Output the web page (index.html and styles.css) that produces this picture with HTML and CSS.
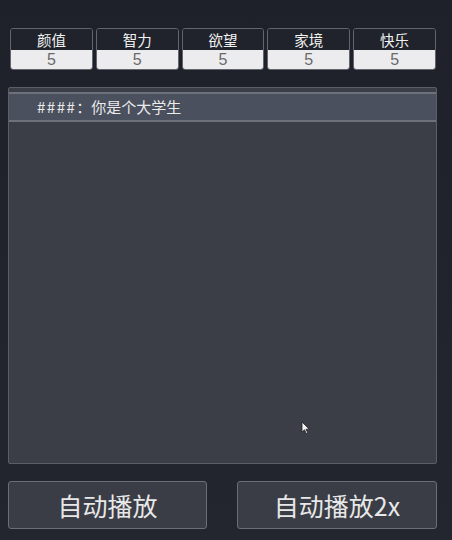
FILE: index.html
```html
<!DOCTYPE html>
<html lang="zh">
<head>
<meta charset="utf-8">
<link rel="stylesheet" href="styles.css">
</head>
<body>
<div class="app">
  <div class="stats">
    <div class="stat"><div class="stat-label">颜值</div><div class="stat-value">5</div></div>
    <div class="stat"><div class="stat-label">智力</div><div class="stat-value">5</div></div>
    <div class="stat"><div class="stat-label">欲望</div><div class="stat-value">5</div></div>
    <div class="stat"><div class="stat-label">家境</div><div class="stat-value">5</div></div>
    <div class="stat"><div class="stat-label">快乐</div><div class="stat-value">5</div></div>
  </div>
  <div class="panel">
    <div class="row"><span class="hash">####</span>：你是个大学生</div>
  </div>
  <div class="buttons">
    <button class="btn btn-left">自动播放</button>
    <button class="btn btn-right">自动播放2x</button>
  </div>
  <svg class="cursor" width="10" height="14" viewBox="0 0 10 14"><path d="M1 1 L1 11 L3.5 8.8 L5.3 12.6 L6.8 11.9 L5 8.2 L8.3 8.2 Z" fill="#f2f2f2" stroke="#222" stroke-width="0.8"/></svg>
</div>
</body>
</html>
```
FILE: styles.css
```css
html, body {
  margin: 0;
  padding: 0;
}
body {
  width: 452px;
  height: 540px;
  background: linear-gradient(#1e2129, #23262e);
  font-family: "Noto Sans CJK SC", "Noto Sans", sans-serif;
  overflow: hidden;
}
.app {
  position: relative;
  padding-top: 28px;
}
.stats {
  display: grid;
  grid-template-columns: repeat(5, 1fr);
  gap: 3px;
  margin: 0 16px 0 10px;
}
.stat {
  border: 1px solid #62656d;
  border-radius: 3px;
  overflow: hidden;
  height: 40px;
  display: flex;
  flex-direction: column;
}
.stat-label {
  height: 21px;
  background: #20232b;
  color: #f2f2f2;
  font-size: 14.5px;
  line-height: 21px;
  text-align: center;
  overflow: hidden;
}
.stat-value {
  flex: 1;
  background: #ececee;
  color: #6a6a6a;
  font-family: "Liberation Sans", "Noto Sans", sans-serif;
  font-size: 16px;
  line-height: 19px;
  text-align: center;
  overflow: hidden;
}
.panel {
  margin: 17px 15px 0 8px;
  background: #3b3e47;
  border: 1px solid #5b5e67;
  border-radius: 2px;
  padding-top: 4px;
  box-sizing: border-box;
  height: 377px;
}
.row {
  height: 26px;
  background: #4a505e;
  border-top: 2px solid #6c717b;
  border-bottom: 2px solid #6c717b;
  color: #ebebeb;
  font-size: 15px;
  line-height: 26px;
  padding-left: 28px;
}
.hash {
  letter-spacing: 1.5px;
}
.buttons {
  display: flex;
  justify-content: space-between;
  margin: 17px 15px 0 8px;
}
.btn {
  height: 48px;
  background: #3a3d45;
  border: 1px solid #6b6e76;
  border-radius: 3px;
  color: #e8e8e8;
  font-family: "Noto Sans CJK SC", "Noto Sans", sans-serif;
  font-size: 25px;
  padding: 0;
}
.btn-left {
  width: 199px;
}
.btn-right {
  width: 200px;
}
.cursor {
  position: absolute;
  left: 301px;
  top: 421px;
}
```
